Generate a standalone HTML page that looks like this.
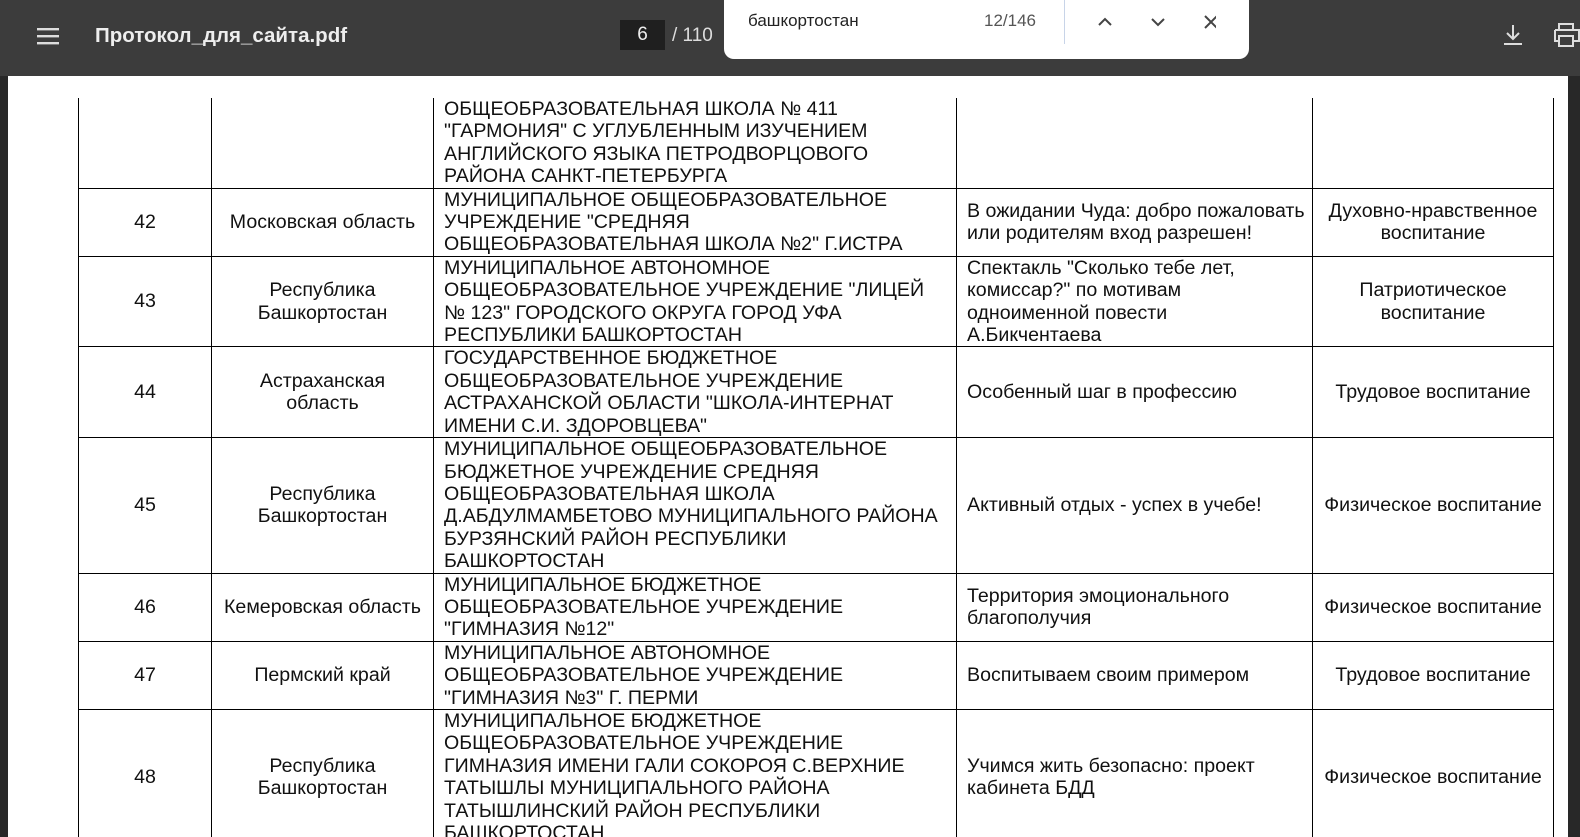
<!DOCTYPE html>
<html><head><meta charset="utf-8"><style>
body{margin:0;width:1580px;height:837px;overflow:hidden;background:#282828;font-family:"Liberation Sans",Arial,sans-serif;position:relative}
.bar{position:absolute;left:0;top:0;width:1580px;height:76px;background:#3c3c3c;color:#fff}
.page{position:absolute;left:8px;top:76px;width:1560px;height:761px;background:#fff;overflow:hidden}
table{position:absolute;left:70px;top:22px;width:1475px;border-collapse:collapse;table-layout:fixed;font-size:19.6px;line-height:22.4px;color:#111}
td{border:1px solid #000;padding:0;vertical-align:middle;white-space:nowrap}
td.c{text-align:center}
td.l{padding-left:10px}
tr.first td{border-top:none}
.find{position:absolute;left:724px;top:0;width:525px;height:59px;background:#fff;border-radius:0 0 10px 10px;color:#222}
</style></head><body>
<div class="bar">
<svg style="position:absolute;left:37px;top:27px" width="22" height="18"><rect y="1" width="22" height="2.4" fill="#ddd"/><rect y="8" width="22" height="2.4" fill="#ddd"/><rect y="15" width="22" height="2.4" fill="#ddd"/></svg>
<div style="position:absolute;left:95px;top:24px;font-size:20.5px;font-weight:bold;color:#eee">Протокол_для_сайта.pdf</div>
<div style="position:absolute;left:620px;top:20px;width:45px;height:30px;background:#1f1f1f;color:#eee;font-size:19px;text-align:center;line-height:30px">6</div>
<div style="position:absolute;left:672px;top:25px;font-size:19px;color:#ddd">/ 110</div>
<svg style="position:absolute;left:1502px;top:23px" width="22" height="24"><path d="M11 2v14M5 10l6 6 6-6M2 21h18" stroke="#ddd" stroke-width="2" fill="none"/></svg>
<svg style="position:absolute;left:1553px;top:22px" width="27" height="26"><path d="M6 8V2h14v6M2 8h24v11h-6M6 19H2V8M6 14h14v10H6z" stroke="#ddd" stroke-width="2" fill="none"/></svg>
</div>
<div class="find">
<div style="position:absolute;left:24px;top:11px;font-size:17px">башкортостан</div>
<div style="position:absolute;left:260px;top:11px;font-size:17px;color:#555">12/146</div>
<div style="position:absolute;left:340px;top:0;width:1px;height:44px;background:#c8d4e8"></div>
<svg style="position:absolute;left:372px;top:13px" width="120" height="18"><path d="M3 12l6-6 6 6" stroke="#444" stroke-width="2" fill="none"/><path d="M56 6l6 6 6-6" stroke="#444" stroke-width="2" fill="none"/><path d="M109 3l12 12M121 3l-12 12" stroke="#444" stroke-width="2" fill="none"/></svg>
</div>
<div class="page">
<table>
<colgroup><col style="width:133px"><col style="width:222px"><col style="width:523px"><col style="width:356px"><col style="width:241px"></colgroup>
<tr class="first" style="height:90px"><td></td><td></td><td class="l">ОБЩЕОБРАЗОВАТЕЛЬНАЯ ШКОЛА № 411<br>"ГАРМОНИЯ" С УГЛУБЛЕННЫМ ИЗУЧЕНИЕМ<br>АНГЛИЙСКОГО ЯЗЫКА ПЕТРОДВОРЦОВОГО<br>РАЙОНА САНКТ-ПЕТЕРБУРГА</td><td></td><td></td></tr>
<tr style="height:68px"><td class="c">42</td><td class="c">Московская область</td><td class="l">МУНИЦИПАЛЬНОЕ ОБЩЕОБРАЗОВАТЕЛЬНОЕ<br>УЧРЕЖДЕНИЕ "СРЕДНЯЯ<br>ОБЩЕОБРАЗОВАТЕЛЬНАЯ ШКОЛА №2" Г.ИСТРА</td><td class="l">В ожидании Чуда: добро пожаловать<br>или родителям вход разрешен!</td><td class="c">Духовно-нравственное<br>воспитание</td></tr>
<tr style="height:90px"><td class="c">43</td><td class="c">Республика<br>Башкортостан</td><td class="l">МУНИЦИПАЛЬНОЕ АВТОНОМНОЕ<br>ОБЩЕОБРАЗОВАТЕЛЬНОЕ УЧРЕЖДЕНИЕ "ЛИЦЕЙ<br>№ 123" ГОРОДСКОГО ОКРУГА ГОРОД УФА<br>РЕСПУБЛИКИ БАШКОРТОСТАН</td><td class="l">Спектакль "Сколько тебе лет,<br>комиссар?" по мотивам<br>одноименной повести<br>А.Бикчентаева</td><td class="c">Патриотическое<br>воспитание</td></tr>
<tr style="height:90px"><td class="c">44</td><td class="c">Астраханская<br>область</td><td class="l">ГОСУДАРСТВЕННОЕ БЮДЖЕТНОЕ<br>ОБЩЕОБРАЗОВАТЕЛЬНОЕ УЧРЕЖДЕНИЕ<br>АСТРАХАНСКОЙ ОБЛАСТИ "ШКОЛА-ИНТЕРНАТ<br>ИМЕНИ С.И. ЗДОРОВЦЕВА"</td><td class="l">Особенный шаг в профессию</td><td class="c">Трудовое воспитание</td></tr>
<tr style="height:134px"><td class="c">45</td><td class="c">Республика<br>Башкортостан</td><td class="l">МУНИЦИПАЛЬНОЕ ОБЩЕОБРАЗОВАТЕЛЬНОЕ<br>БЮДЖЕТНОЕ УЧРЕЖДЕНИЕ СРЕДНЯЯ<br>ОБЩЕОБРАЗОВАТЕЛЬНАЯ ШКОЛА<br>Д.АБДУЛМАМБЕТОВО МУНИЦИПАЛЬНОГО РАЙОНА<br>БУРЗЯНСКИЙ РАЙОН РЕСПУБЛИКИ<br>БАШКОРТОСТАН</td><td class="l">Активный отдых - успех в учебе!</td><td class="c">Физическое воспитание</td></tr>
<tr style="height:68px"><td class="c">46</td><td class="c">Кемеровская область</td><td class="l">МУНИЦИПАЛЬНОЕ БЮДЖЕТНОЕ<br>ОБЩЕОБРАЗОВАТЕЛЬНОЕ УЧРЕЖДЕНИЕ<br>"ГИМНАЗИЯ №12"</td><td class="l">Территория эмоционального<br>благополучия</td><td class="c">Физическое воспитание</td></tr>
<tr style="height:68px"><td class="c">47</td><td class="c">Пермский край</td><td class="l">МУНИЦИПАЛЬНОЕ АВТОНОМНОЕ<br>ОБЩЕОБРАЗОВАТЕЛЬНОЕ УЧРЕЖДЕНИЕ<br>"ГИМНАЗИЯ №3" Г. ПЕРМИ</td><td class="l">Воспитываем своим примером</td><td class="c">Трудовое воспитание</td></tr>
<tr style="height:134px"><td class="c">48</td><td class="c">Республика<br>Башкортостан</td><td class="l">МУНИЦИПАЛЬНОЕ БЮДЖЕТНОЕ<br>ОБЩЕОБРАЗОВАТЕЛЬНОЕ УЧРЕЖДЕНИЕ<br>ГИМНАЗИЯ ИМЕНИ ГАЛИ СОКОРОЯ С.ВЕРХНИЕ<br>ТАТЫШЛЫ МУНИЦИПАЛЬНОГО РАЙОНА<br>ТАТЫШЛИНСКИЙ РАЙОН РЕСПУБЛИКИ<br>БАШКОРТОСТАН</td><td class="l">Учимся жить безопасно: проект<br>кабинета БДД</td><td class="c">Физическое воспитание</td></tr>
</table>
</div>
</body></html>
